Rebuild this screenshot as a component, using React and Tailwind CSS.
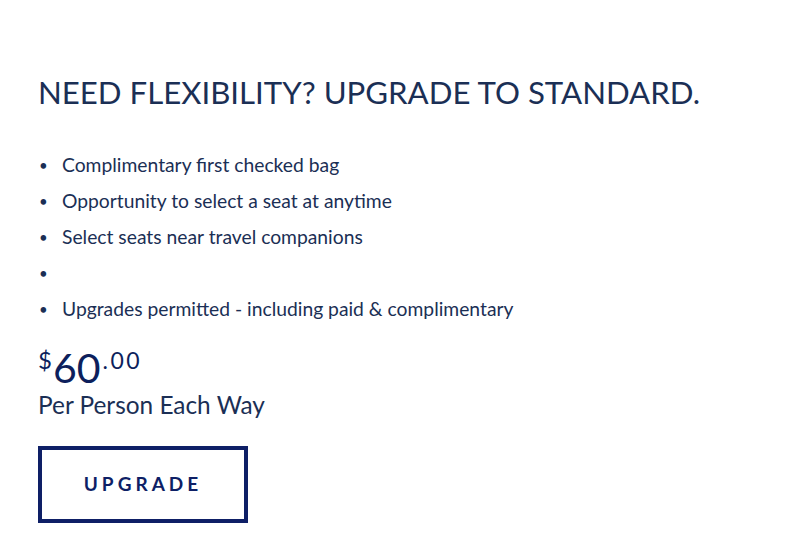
export default function App() {
  const items = [
    "Complimentary first checked bag",
    "Opportunity to select a seat at anytime",
    "Select seats near travel companions",
    "",
    "Upgrades permitted - including paid & complimentary",
  ];
  return (
    <div className="w-[800px] h-[556px] bg-white text-[#1b2f55] pl-[38px] pt-[73px]" style={{ fontFamily: "Lato, 'Open Sans', sans-serif" }}>
      <h1 className="text-[31.2px] leading-[38px] font-normal">NEED FLEXIBILITY? UPGRADE TO STANDARD.</h1>
      <ul className="mt-[36px] flex flex-col">
        {items.map((t, i) => (
          <li key={i} className="flex items-center h-[36px] text-[19.3px]">
            <span className="w-[24px] text-[15px] pl-[1px]">•</span>
            <span>{t}</span>
          </li>
        ))}
      </ul>
      <div className="mt-[20px] flex items-start text-[#0d1f5c] h-[41px]">
        <span className="text-[24px] leading-none mt-[1px] mr-[1px]">$</span>
        <span className="text-[41px] leading-none">60</span>
        <span className="text-[23px] leading-none mt-[2px] ml-[2px] tracking-[2.5px]">.00</span>
      </div>
      <div className="text-[24.4px] leading-[30px] mt-[2px]">Per Person Each Way</div>
      <button className="mt-[26px] w-[210px] h-[77px] border-[4px] border-[#0e1f66] text-[#0e1f66] text-[19px] font-bold tracking-[4px]">UPGRADE</button>
    </div>
  );
}
